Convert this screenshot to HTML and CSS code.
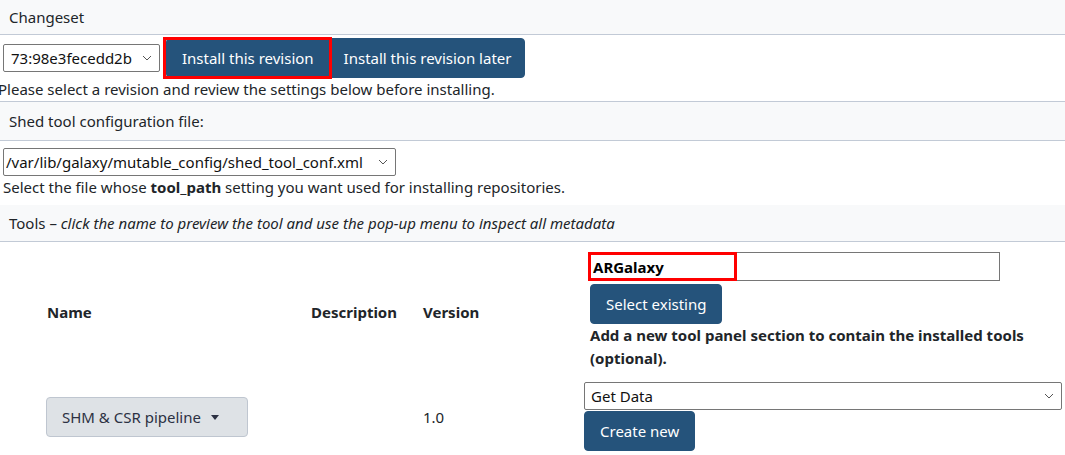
FILE: index.html
```html
<!DOCTYPE html>
<html lang="en">
<head>
<meta charset="utf-8">
<title>Install repository</title>
<link rel="stylesheet" href="styles.css">
</head>
<body>
<div class="band">Changeset</div>
<div class="content content-first">
  <div class="form-row">
    <div class="select-wrap sel-rev">
      <select class="sel"><option>73:98e3fecedd2b</option></select>
      <svg class="chev" width="10" height="6" viewBox="0 0 10 6"><path d="M1 1l4 4 4-4" fill="none" stroke="#555" stroke-width="1"/></svg>
    </div>
    <div class="btn-group">
      <button class="btn btn-primary btn-first marked">Install this revision</button>
      <button class="btn btn-primary btn-last">Install this revision later</button>
    </div>
  </div>
  <p class="note note-shift">Please select a revision and review the settings below before installing.</p>
</div>
<div class="band band-bordered">Shed tool configuration file:</div>
<div class="content content-second">
  <div class="select-wrap sel-conf">
    <select class="sel"><option>/var/lib/galaxy/mutable_config/shed_tool_conf.xml</option></select>
    <svg class="chev" width="10" height="6" viewBox="0 0 10 6"><path d="M1 1l4 4 4-4" fill="none" stroke="#555" stroke-width="1"/></svg>
  </div>
  <p class="note">Select the file whose <b>tool_path</b> setting you want used for installing repositories.</p>
</div>
<div class="band band-tools">Tools – <i>click the name to preview the tool and use the pop-up menu to inspect all metadata</i></div>
<table class="tools">
  <thead>
    <tr>
      <th class="c-name">Name</th>
      <th class="c-desc">Description</th>
      <th class="c-ver">Version</th>
      <th class="c-sec">
        <div class="picker">
          <div class="input-wrap">
            <input class="sec-input" type="text" value="ARGalaxy">
            <span class="hl"></span>
          </div>
          <button class="btn btn-primary btn-single">Select existing</button>
          <div class="hint">Add a new tool panel section to contain the installed tools (optional).</div>
        </div>
      </th>
    </tr>
  </thead>
  <tbody>
    <tr>
      <td class="c-name"><button class="btn btn-light">SHM &amp; CSR pipeline <span class="caret"></span></button></td>
      <td class="c-desc"></td>
      <td class="c-ver">1.0</td>
      <td class="c-sec">
        <div class="select-wrap sel-sec">
          <select class="sel"><option>Get Data</option></select>
          <svg class="chev" width="10" height="6" viewBox="0 0 10 6"><path d="M1 1l4 4 4-4" fill="none" stroke="#555" stroke-width="1"/></svg>
        </div>
        <button class="btn btn-primary btn-single">Create new</button>
      </td>
    </tr>
  </tbody>
</table>
</body>
</html>
```
FILE: styles.css
```css
* { box-sizing: border-box; }
html, body { margin: 0; padding: 0; overflow: hidden; }
body {
  font-family: "Noto Sans", "Open Sans", sans-serif;
  font-size: 15px;
  line-height: 22px;
  color: #212529;
  background: #fff;
  width: 1065px;
  height: 455px;
}
.band {
  background: #f8f9fa;
  padding: 6px 9px;
  border-bottom: 1px solid #c2cad6;
}
.band-bordered {
  padding: 8px 9px;
}
.band-tools {
  padding: 7px 9px;
}
.content { padding: 0 3px; }
.content-first {
  padding-top: 3px;
  border-bottom: 1px solid #c2cad6;
}
.content-second { padding-bottom: 6px; }
.form-row {
  display: flex;
  align-items: center;
}
.note { margin: 0; padding: 0 0 1px; white-space: nowrap; }
.note-shift { margin-left: -5px; }
.select-wrap {
  position: relative;
  display: inline-block;
}
.sel {
  -webkit-appearance: none;
  appearance: none;
  font-family: inherit;
  font-size: 15px;
  color: #111;
  background: #fff;
  border: 1px solid #767676;
  border-radius: 2px;
  height: 28px;
  line-height: 26px;
  padding: 0 24px 0 7px;
  margin: 0;
  display: block;
}
.chev {
  position: absolute;
  right: 8px;
  top: 11px;
  pointer-events: none;
}
.sel-rev .sel { width: 157px; }
.sel-conf { margin-top: 7px; }
.sel-conf .sel { width: 393px; padding-left: 2px; }
.sel-sec { display: block; }
.sel-sec .sel { width: 478px; padding-left: 6px; }
.btn-group { display: flex; margin-left: 6px; }
.btn {
  font-family: inherit;
  font-size: 15px;
  line-height: 22px;
  padding: 8px 15px;
  border: 1px solid transparent;
  border-radius: 4px;
  cursor: pointer;
  display: inline-block;
  white-space: nowrap;
}
.btn-primary {
  background: #25537b;
  border-color: #25537b;
  color: #fff;
}
.btn-first { border-radius: 4px 0 0 4px; padding: 8px 15px; }
.btn-last { border-radius: 0 4px 4px 0; padding: 8px 13px; }
.marked { position: relative; }
.marked::after {
  content: "";
  position: absolute;
  left: -4px;
  top: -2px;
  right: -3px;
  bottom: -2px;
  border: 3px solid #ff0000;
}
.tools {
  border-collapse: collapse;
  margin-top: 1px;
  width: 1065px;
}
.tools th, .tools td {
  vertical-align: middle;
  text-align: left;
  padding: 6px 12px;
}
.tools th { font-weight: 700; padding-top: 11px; padding-bottom: 6px; }
.tools th.c-sec { padding-top: 7px; }
.c-name { width: 299px; }
.tools th.c-name { padding-left: 47px; }
.tools td.c-name { padding-left: 46px; }
.c-desc { width: 112px; }
.c-ver { width: 161px; }
.tools .c-sec { padding-right: 3px; }
.picker { padding-left: 6px; }
.input-wrap { position: relative; width: 410px; margin-top: 2px; }
.sec-input {
  display: block;
  width: 410px;
  height: 29px;
  border: 1px solid #767676;
  border-radius: 0;
  font-family: inherit;
  font-size: 15px;
  font-weight: 700;
  color: #000;
  padding: 0 2px;
  margin: 0;
}
.hl {
  position: absolute;
  left: -2px;
  top: 0;
  width: 149px;
  height: 29px;
  border: 3px solid #ff0000;
}
.picker .btn-single { margin-top: 3px; }
.hint { font-weight: 700; line-height: 23px; }
.btn-light {
  background: #dee2e6;
  border: 1px solid #bfc6d0;
  color: #2c3143;
  width: 202px;
  text-align: left;
}
.caret {
  display: inline-block;
  width: 0;
  height: 0;
  margin-left: 6px;
  vertical-align: 3px;
  border-top: 5px solid #2c3143;
  border-left: 4px solid transparent;
  border-right: 4px solid transparent;
}
.tools td .btn-single { margin-top: 1px; }
```
